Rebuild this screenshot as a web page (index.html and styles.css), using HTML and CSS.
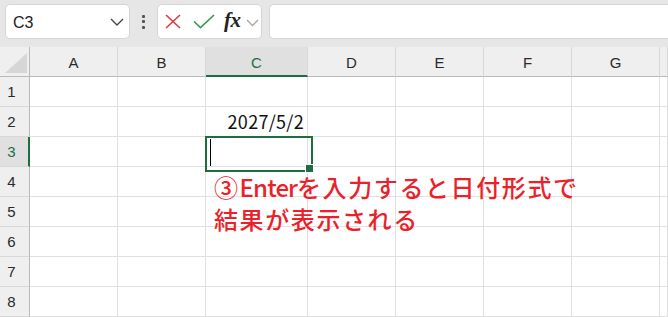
FILE: index.html
```html
<!DOCTYPE html>
<html lang="ja">
<head>
<meta charset="utf-8">
<link rel="stylesheet" href="styles.css">
</head>
<body>
<div class="toolbar">
  <div class="namebox">
    <span class="name">C3</span>
    <svg class="chev" width="14" height="8" viewBox="0 0 14 8"><path d="M1 1 L7 7 L13 1" fill="none" stroke="#444" stroke-width="1.4"/></svg>
  </div>
  <div class="dots"><i></i><i></i><i></i></div>
  <div class="fbtns">
    <svg class="ic-x" width="16" height="15" viewBox="0 0 16 15"><path d="M1 1 L15 14 M15 1 L1 14" stroke="#e2383f" stroke-width="1.6" fill="none"/></svg>
    <svg class="ic-ok" width="22" height="15" viewBox="0 0 22 15"><path d="M1 7.5 L7.5 13.5 L21 1" stroke="#3a9b4f" stroke-width="1.7" fill="none"/></svg>
    <span class="fx">fx</span>
    <svg class="chev2" width="13" height="8" viewBox="0 0 13 8"><path d="M1 1 L6.5 6.5 L12 1" fill="none" stroke="#a8a8a8" stroke-width="1.3"/></svg>
  </div>
  <div class="finput"></div>
</div>
<div class="sheet">
  <div class="corner"><span class="tri"></span></div>
  <div class="ch">A</div><div class="ch">B</div><div class="ch sel">C</div><div class="ch">D</div><div class="ch">E</div><div class="ch">F</div><div class="ch">G</div><div class="ch"></div>

  <div class="rh">1</div><div class="c"></div><div class="c"></div><div class="c"></div><div class="c"></div><div class="c"></div><div class="c"></div><div class="c"></div><div class="c"></div>
  <div class="rh">2</div><div class="c"></div><div class="c"></div><div class="c val">2027/5/2</div><div class="c"></div><div class="c"></div><div class="c"></div><div class="c"></div><div class="c"></div>
  <div class="rh sel">3</div><div class="c"></div><div class="c"></div><div class="c active"><span class="caret"></span></div><div class="c"></div><div class="c"></div><div class="c"></div><div class="c"></div><div class="c"></div>
  <div class="rh">4</div><div class="c"></div><div class="c"></div><div class="c"></div><div class="c"></div><div class="c"></div><div class="c"></div><div class="c"></div><div class="c"></div>
  <div class="rh">5</div><div class="c"></div><div class="c"></div><div class="c"></div><div class="c"></div><div class="c"></div><div class="c"></div><div class="c"></div><div class="c"></div>
  <div class="rh">6</div><div class="c"></div><div class="c"></div><div class="c"></div><div class="c"></div><div class="c"></div><div class="c"></div><div class="c"></div><div class="c"></div>
  <div class="rh">7</div><div class="c"></div><div class="c"></div><div class="c"></div><div class="c"></div><div class="c"></div><div class="c"></div><div class="c"></div><div class="c"></div>
  <div class="rh">8</div><div class="c"></div><div class="c"></div><div class="c"></div><div class="c"></div><div class="c"></div><div class="c"></div><div class="c"></div><div class="c"></div>

  <div class="note">③<span class="en">Enter</span>を入力すると日付形式で<br>結果が表示される</div>
</div>
</body>
</html>
```
FILE: styles.css
```css
* { box-sizing: border-box; }
html, body { margin: 0; padding: 0; }
body {
  width: 668px;
  height: 317px;
  overflow: hidden;
  background: #ffffff;
  font-family: "Liberation Sans", "Noto Sans CJK JP", sans-serif;
}
.toolbar {
  height: 47px;
  background: #e6e6e6;
  display: flex;
  align-items: flex-start;
  padding: 4px 0 0 5px;
}
.namebox {
  width: 125px;
  height: 35px;
  background: #fff;
  border: 1px solid #d6d6d6;
  border-radius: 5px;
  display: flex;
  align-items: center;
  justify-content: space-between;
  padding: 0 5px 0 7px;
}
.name { font-size: 16px; color: #222; padding-top: 2px; }
.chev { margin-top: 1px; }
.dots {
  width: 27px;
  height: 35px;
  display: flex;
  flex-direction: column;
  align-items: center;
  justify-content: center;
  gap: 2.5px;
}
.dots i { display: block; width: 3px; height: 3px; background: #555; border-radius: 1px; }
.fbtns {
  width: 105px;
  height: 35px;
  background: #fff;
  border: 1px solid #d6d6d6;
  border-radius: 5px;
  display: flex;
  align-items: center;
  padding: 0 0 0 7px;
}
.ic-x { margin-right: 12px; }
.ic-ok { margin-right: 9px; }
.fx {
  font-family: "Liberation Serif", "DejaVu Serif", serif;
  font-style: italic;
  font-weight: bold;
  font-size: 21px;
  color: #222;
  margin-right: 5px;
  margin-top: -2px;
  letter-spacing: -0.5px;
}
.chev2 { margin-top: 2px; }
.finput {
  margin-left: 7px;
  flex: 1;
  height: 35px;
  background: #fff;
  border: 1px solid #d6d6d6;
  border-right: none;
  border-radius: 5px 0 0 5px;
}
.sheet {
  position: relative;
  display: grid;
  grid-template-columns: 30px 88px 88px 102px 88px 88px 88px 88px 8px;
  grid-template-rows: repeat(9, 30px);
}
.corner {
  background: #efefef;
  border-right: 1px solid #b9b9b9;
  border-bottom: 1px solid #b9b9b9;
  position: relative;
}
.tri {
  position: absolute;
  left: 5px;
  top: 6px;
  width: 22px;
  height: 20px;
  background: #d6d6d6;
  clip-path: polygon(100% 0, 100% 100%, 0 100%);
}
.ch {
  background: #efefef;
  border-right: 1px solid #d8d8d8;
  border-bottom: 1px solid #b9b9b9;
  display: flex;
  align-items: center;
  justify-content: center;
  font-size: 15px;
  color: #2a2a2a;
  padding-top: 1px;
}
.ch.sel {
  background: #e0e0e0;
  color: #1e6e42;
  border-bottom: 2px solid #1e6e42;
  padding-top: 2px;
}
.rh {
  background: #efefef;
  border-right: 1px solid #b9b9b9;
  border-bottom: 1px solid #d8d8d8;
  display: flex;
  align-items: center;
  justify-content: center;
  padding-right: 6px;
  font-size: 15px;
  color: #2a2a2a;
}
.rh.sel {
  background: #e0e0e0;
  color: #1e6e42;
  border-right: 2px solid #1e6e42;
  padding-right: 5px;
}
.c {
  border-right: 1px solid #e0e0e0;
  border-bottom: 1px solid #e0e0e0;
}
.val {
  display: flex;
  align-items: flex-end;
  justify-content: flex-end;
  padding: 0 3px 3px 0;
  font-family: "Noto Sans CJK JP", sans-serif;
  font-size: 18px;
  line-height: 24px;
  letter-spacing: 0.3px;
  color: #111;
}
.active { position: relative; }
.active::after {
  content: "";
  position: absolute;
  left: -1px;
  top: -1px;
  width: 104px;
  height: 32px;
  border: 2px solid #1e6e42;
}
.active::before {
  content: "";
  position: absolute;
  left: 99px;
  top: 27px;
  width: 7px;
  height: 7px;
  background: #1e6e42;
  border: 1px solid #fff;
  z-index: 2;
}
.caret {
  position: absolute;
  left: 4px;
  top: 2px;
  width: 1px;
  height: 27px;
  background: #000;
}
.note {
  position: absolute;
  left: 214px;
  top: 124px;
  font-family: "Noto Sans CJK JP", sans-serif;
  font-weight: 500;
  font-size: 24px;
  line-height: 32px;
  letter-spacing: 1.6px;
  color: #ec1f2a;
  white-space: nowrap;
}
.en { letter-spacing: -0.9px; }
```
